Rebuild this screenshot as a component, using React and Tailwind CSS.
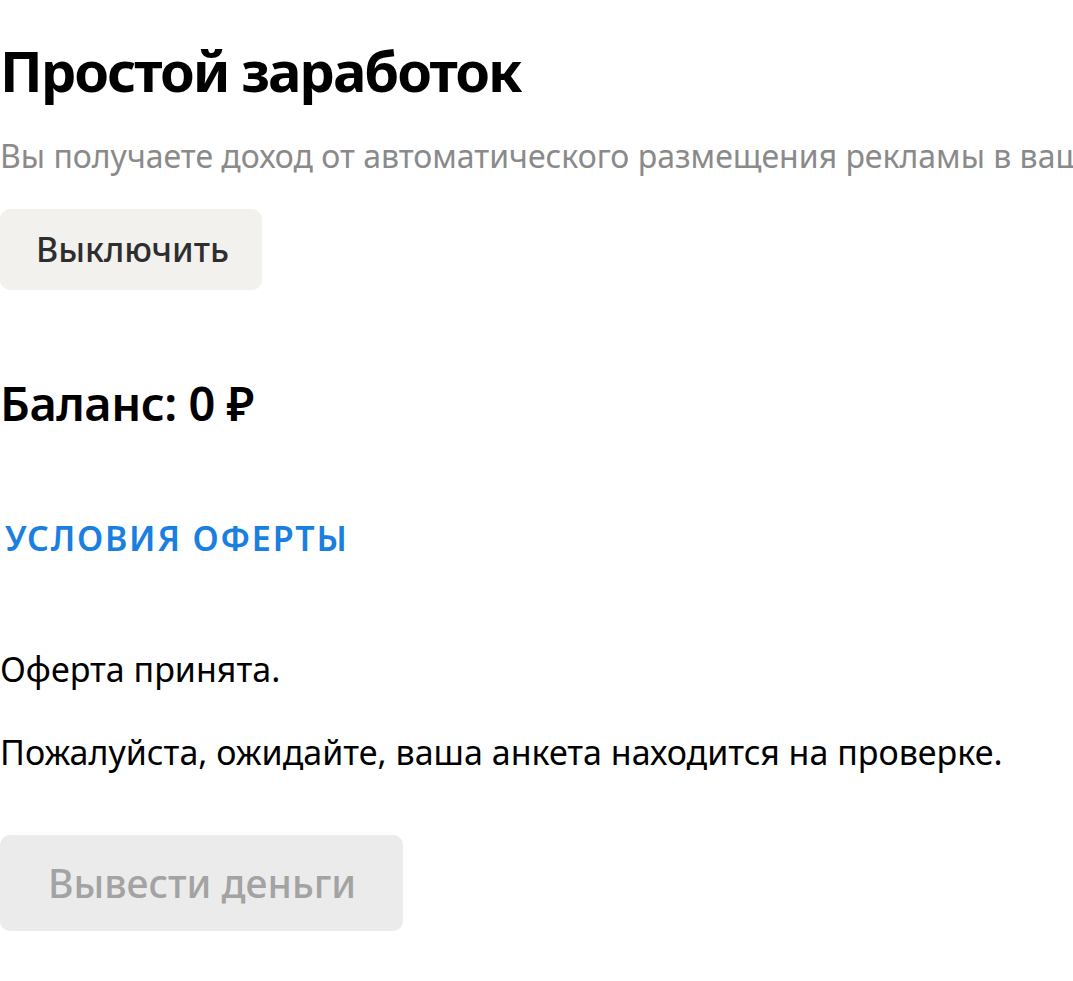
export default function App() {
  return (
    <div className="min-h-screen w-full overflow-hidden bg-white font-['Noto_Sans',sans-serif]">
      <div className="flex flex-col items-start">
        <h1 className="mt-[34px] text-[56px] font-bold leading-[72px] tracking-[-2px] text-black">Простой заработок</h1>
        <p className="mt-[30px] whitespace-nowrap text-[32px] leading-[40px] text-[#8a8a8a]">
          Вы получаете доход от автоматического размещения рекламы в ваших публикациях
        </p>
        <button className="mt-[33px] h-[81px] w-[262px] rounded-[10px] bg-[#f2f1ee] pl-[36px] text-left text-[34px] font-medium text-[#2e2e2e]">
          Выключить
        </button>
        <h2 className="mt-[83px] text-[47px] font-semibold leading-[60px] tracking-[-0.5px] text-black">Баланс: 0 ₽</h2>
        <a className="ml-[5px] mt-[83px] text-[34px] font-semibold uppercase leading-[44px] tracking-[1.8px] text-[#1a7fe0]">
          Условия оферты
        </a>
        <p className="mt-[87px] text-[34px] leading-[44px] text-black">Оферта принята.</p>
        <p className="mt-[39px] text-[34px] leading-[44px] text-black">Пожалуйста, ожидайте, ваша анкета находится на проверке.</p>
        <button disabled className="mt-[61px] h-[96px] w-[403px] rounded-[10px] bg-[#ebebeb] pl-[48px] text-left text-[39px] font-medium text-[#a3a3a3]">
          Вывести деньги
        </button>
      </div>
    </div>
  );
}
